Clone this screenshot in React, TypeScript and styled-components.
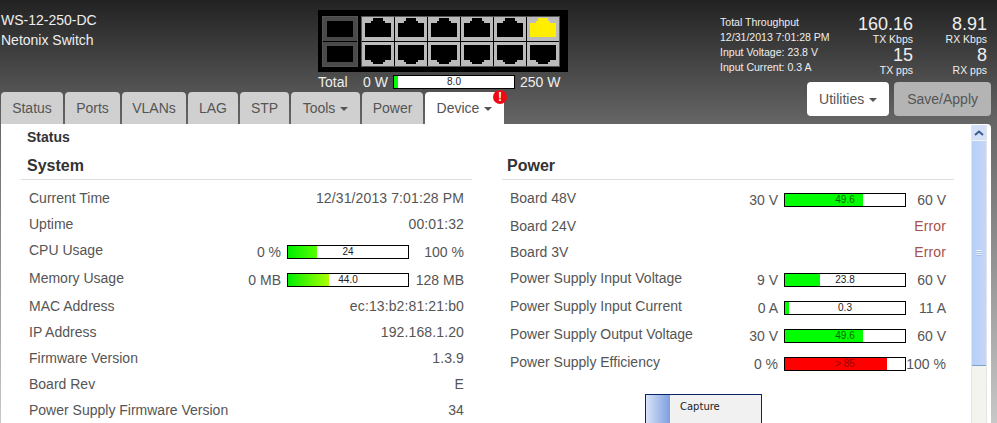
import React from "react";
import styled, { createGlobalStyle } from "styled-components";

const Global = createGlobalStyle`
  html, body { margin: 0; height: 423px; overflow: hidden; }
  body {
    font-family: "Liberation Sans", Arial, sans-serif;
    background: linear-gradient(to bottom, #222 0, #666 124px, #c8c8c8 423px) no-repeat;
  }
`;

const Page = styled.div`
  width: 997px;
  height: 423px;
  overflow: hidden;
  display: flex;
  flex-direction: column;
`;
const Header = styled.header`
  height: 124px;
  display: flex;
  justify-content: space-between;
  flex: none;
`;
const HeaderLeft = styled.div`
  display: flex;
  flex-direction: column;
  justify-content: space-between;
  padding-left: 1px;
`;
const TopRow = styled.div`
  display: flex;
  padding-top: 10px;
`;
const Brand = styled.div`
  width: 317px;
  color: #eee;
  font-size: 14px;
  line-height: 20px;
`;
const SwitchColumn = styled.div`
  width: 250px;
  color: #eee;
  font-size: 14px;
`;
const SwitchBox = styled.div`
  height: 62px;
  background: #000;
  display: flex;
  align-items: center;
  gap: 5px;
  padding-left: 5px;
  box-sizing: border-box;
`;
const PortGrid = styled.div<{ $cols: number }>`
  display: grid;
  grid-template-columns: repeat(${(p) => p.$cols}, auto);
  gap: 1px;
  outline: 1px solid #555;
`;
const Svg = styled.svg`
  display: block;
`;
const TotalRow = styled.div`
  display: flex;
  align-items: center;
  height: 20px;
`;
const TotalLabel = styled.span`
  width: 45px;
`;
const TotalMin = styled.span`
  width: 30px;
`;
const TotalMax = styled.span`
  margin-left: 5px;
`;
const Tabs = styled.nav`
  display: flex;
  gap: 2px;
`;
const Tab = styled.div<{ $active?: boolean; $w: number }>`
  position: relative;
  width: ${(p) => p.$w}px;
  height: 32px;
  border-radius: 4px 4px 0 0;
  background: ${(p) => (p.$active ? "#fff" : "#d0d0d0")};
  color: #555;
  font-size: 14px;
  line-height: 32px;
  text-align: center;
  white-space: nowrap;
`;
const Caret = styled.span`
  display: inline-block;
  margin-left: 5px;
  vertical-align: middle;
  border-top: 4px solid #555;
  border-left: 4px solid transparent;
  border-right: 4px solid transparent;
`;
const Badge = styled.span`
  position: absolute;
  top: -2px;
  right: -3px;
  width: 14px;
  height: 14px;
  border-radius: 50%;
  background: #ee0a14;
  color: #fff;
  font-size: 12px;
  font-weight: bold;
  line-height: 14px;
  text-align: center;
`;
const HeaderRight = styled.div`
  width: 277px;
  display: flex;
  flex-direction: column;
  padding-right: 6px;
  box-sizing: border-box;
`;
const Stats = styled.div`
  display: flex;
  height: 82px;
  padding-top: 15px;
  box-sizing: border-box;
`;
const Throughput = styled.div`
  width: 120px;
  color: #eee;
  font-size: 10.55px;
  line-height: 15px;
  white-space: nowrap;
`;
const StatGrid = styled.div`
  display: grid;
  grid-template-columns: 73px 74px;
  grid-auto-rows: 31px;
  text-align: right;
  color: #eee;
`;
const StatValue = styled.div`
  font-size: 18px;
  line-height: 19px;
`;
const StatUnit = styled.div`
  font-size: 10.5px;
  line-height: 10px;
`;
const Actions = styled.div`
  display: flex;
  justify-content: flex-end;
  gap: 5px;
`;
const Button = styled.div<{ $muted?: boolean; $pad: number }>`
  height: 34px;
  padding: 0 ${(p) => p.$pad}px;
  border-radius: 4px;
  background: ${(p) => (p.$muted ? "#b4b4b4" : "#fff")};
  color: #555;
  font-size: 14px;
  line-height: 34px;
`;
const Panel = styled.main`
  position: relative;
  flex: 1;
  min-height: 0;
  margin: 0 6px 0 1px;
  background: #fff;
  border-radius: 0 4px 0 0;
  display: flex;
  overflow: hidden;
`;
const Content = styled.div`
  flex: 1;
  padding: 4px 0 0 20px;
`;
const PageTitle = styled.h1`
  margin: 0 0 11px 6px;
  color: #333;
  font-size: 14px;
  line-height: 18px;
  font-weight: bold;
`;
const Columns = styled.div`
  display: grid;
  grid-template-columns: 451px 452px;
  gap: 30px;
`;
const Heading = styled.h2<{ $inset: number }>`
  margin: 0 0 5px;
  padding: 0 ${(p) => p.$inset}px 4px;
  border-bottom: 1px solid #ddd;
  color: #333;
  font-size: 16px;
  line-height: 18px;
  font-weight: bold;
`;
const Row = styled.div<{ $tall?: boolean }>`
  height: ${(p) => (p.$tall ? 28 : 26)}px;
  padding: 0 8px;
  display: flex;
  justify-content: space-between;
  color: #555;
  font-size: 14px;
  line-height: 26px;
`;
const Value = styled.span<{ $error?: boolean }>`
  color: ${(p) => (p.$error ? "#a5524c" : "#555")};
  letter-spacing: 0.12px;
`;
const MeterCell = styled.div`
  display: flex;
  align-items: center;
  height: 26px;
  margin-top: 2px;
`;
const MeterMin = styled.span`
  margin-right: 6px;
  white-space: nowrap;
`;
const MeterMax = styled.span<{ $w: number }>`
  width: ${(p) => p.$w}px;
  text-align: right;
  white-space: nowrap;
`;
const MeterBox = styled.div<{ $w: number }>`
  position: relative;
  width: ${(p) => p.$w}px;
  height: 14px;
  box-sizing: border-box;
  border: 1px solid #000;
  background: #fff;
  overflow: hidden;
  flex: none;
`;
const MeterFill = styled.div<{ $bg: string }>`
  height: 100%;
  background: ${(p) => p.$bg};
`;
const MeterText = styled.span<{ $color?: string }>`
  position: absolute;
  inset: 0;
  text-align: center;
  color: ${(p) => p.$color || "#222"};
  font-size: 10px;
  line-height: 11px;
`;
const Scrollbar = styled.div`
  width: 16px;
  margin: 1px 4px 0 0;
  flex: none;
  background: #f4f4ef;
  border-left: 1px solid #e4e4e4;
  border-right: 1px solid #e4e4e4;
  box-sizing: border-box;
`;
const ScrollUp = styled.div`
  height: 15px;
  background: #d3e0f8;
  display: flex;
  align-items: center;
  justify-content: center;
`;
const ScrollThumb = styled.div`
  height: 225px;
  margin-top: 1px;
  background: linear-gradient(to right, #b9cff6, #c4d6fa);
  border-bottom: 1px solid #7f9fd0;
  display: flex;
  align-items: center;
  justify-content: center;
  box-sizing: border-box;
`;
const Grip = styled.div`
  width: 6px;
  height: 6px;
  background: repeating-linear-gradient(to bottom, #e8f0ff 0 1px, #a8c0ec 1px 2px);
`;
const ContextMenu = styled.div`
  position: absolute;
  left: 644px;
  top: 270px;
  width: 117px;
  height: 60px;
  box-sizing: border-box;
  border: 1px solid #0a246a;
  background: #f1f1f1;
  display: flex;
`;
const MenuStrip = styled.div`
  width: 24px;
  background: linear-gradient(to right, #d8e4f8, #7d9edf);
`;
const MenuItem = styled.div`
  padding: 5px 0 0 10px;
  color: #222;
  font-family: "DejaVu Sans", sans-serif;
  font-size: 10px;
  line-height: 14px;
`;

const Copper = ({ flip, on }: { flip?: boolean; on?: boolean }) => (
  <Svg width="32" height="24" viewBox="0 0 32 24">
    <rect width="32" height="24" fill="#bbb" />
    <path
      d={flip
        ? "M3 3H29V18H23V20H21V22H11V20H9V18H3Z"
        : "M3 6H9V4H11V1H21V4H23V6H29V20H3Z"}
      fill={on ? "#ffee00" : "#000"}
    />
  </Svg>
);
const Sfp = () => (
  <Svg width="34" height="24" viewBox="0 0 34 24">
    <rect width="34" height="24" fill="#4a4a4a" />
    <rect x="4" y="4" width="26" height="16" fill="#000" />
  </Svg>
);

const Meter = ({ w = 122, pct, bg = "#00ff00", text, color }: { w?: number; pct: number; bg?: string; text: string; color?: string }) => (
  <MeterBox $w={w}>
    <MeterFill $bg={bg} style={{ width: `${pct}%` }} />
    <MeterText $color={color}>{text}</MeterText>
  </MeterBox>
);

const MeterRow = (p: { label: string; min: string; max: string; pct: number; bg?: string; text: string; color?: string; maxWidth: number }) => (
  <Row $tall>
    <span>{p.label}</span>
    <MeterCell>
      <MeterMin>{p.min}</MeterMin>
      <Meter pct={p.pct} bg={p.bg} text={p.text} color={p.color} />
      <MeterMax $w={p.maxWidth}>{p.max}</MeterMax>
    </MeterCell>
  </Row>
);

const TextRow = ({ label, value, error }: { label: string; value: string; error?: boolean }) => (
  <Row>
    <span>{label}</span>
    <Value $error={error}>{value}</Value>
  </Row>
);

export default function App() {
  return (
    <Page>
      <Global />
      <Header>
        <HeaderLeft>
          <TopRow>
            <Brand>
              WS-12-250-DC
              <br />
              Netonix Switch
            </Brand>
            <SwitchColumn>
              <SwitchBox>
                <PortGrid $cols={1}>
                  <Sfp />
                  <Sfp />
                </PortGrid>
                <PortGrid $cols={6}>
                  {[0, 1, 2, 3, 4, 5].map((i) => (
                    <Copper key={i} on={i === 5} />
                  ))}
                  {[0, 1, 2, 3, 4, 5].map((i) => (
                    <Copper key={i} flip />
                  ))}
                </PortGrid>
              </SwitchBox>
              <TotalRow>
                <TotalLabel>Total</TotalLabel>
                <TotalMin>0 W</TotalMin>
                <Meter w={122} pct={3.5} text="8.0" />
                <TotalMax>250 W</TotalMax>
              </TotalRow>
            </SwitchColumn>
          </TopRow>
          <Tabs>
            <Tab $w={62}>Status</Tab>
            <Tab $w={55}>Ports</Tab>
            <Tab $w={64}>VLANs</Tab>
            <Tab $w={50}>LAG</Tab>
            <Tab $w={49}>STP</Tab>
            <Tab $w={69}>
              Tools
              <Caret />
            </Tab>
            <Tab $w={61}>Power</Tab>
            <Tab $w={79} $active>
              Device
              <Caret />
              <Badge>!</Badge>
            </Tab>
          </Tabs>
        </HeaderLeft>
        <HeaderRight>
          <Stats>
            <Throughput>
              Total Throughput
              <br />
              12/31/2013 7:01:28 PM
              <br />
              Input Voltage: 23.8 V
              <br />
              Input Current: 0.3 A
            </Throughput>
            <StatGrid>
              <div>
                <StatValue>160.16</StatValue>
                <StatUnit>TX Kbps</StatUnit>
              </div>
              <div>
                <StatValue>8.91</StatValue>
                <StatUnit>RX Kbps</StatUnit>
              </div>
              <div>
                <StatValue>15</StatValue>
                <StatUnit>TX pps</StatUnit>
              </div>
              <div>
                <StatValue>8</StatValue>
                <StatUnit>RX pps</StatUnit>
              </div>
            </StatGrid>
          </Stats>
          <Actions>
            <Button $pad={12}>
              Utilities
              <Caret />
            </Button>
            <Button $pad={13} $muted>Save/Apply</Button>
          </Actions>
        </HeaderRight>
      </Header>
      <Panel>
        <Content>
          <PageTitle>Status</PageTitle>
          <Columns>
            <section>
              <Heading $inset={6}>System</Heading>
              <TextRow label="Current Time" value="12/31/2013 7:01:28 PM" />
              <TextRow label="Uptime" value="00:01:32" />
              <MeterRow label="CPU Usage" min="0 %" max="100 %" maxWidth={55} pct={24} bg="linear-gradient(to right,#00ee00,#55ff00)" text="24" />
              <MeterRow label="Memory Usage" min="0 MB" max="128 MB" maxWidth={55} pct={34} bg="linear-gradient(to right,#00ee00,#aaff00)" text="44.0" />
              <TextRow label="MAC Address" value="ec:13:b2:81:21:b0" />
              <TextRow label="IP Address" value="192.168.1.20" />
              <TextRow label="Firmware Version" value="1.3.9" />
              <TextRow label="Board Rev" value="E" />
              <TextRow label="Power Supply Firmware Version" value="34" />
            </section>
            <section>
              <Heading $inset={5}>Power</Heading>
              <MeterRow label="Board 48V" min="30 V" max="60 V" maxWidth={40} pct={65} text="49.6" color="#060" />
              <TextRow label="Board 24V" value="Error" error />
              <TextRow label="Board 3V" value="Error" error />
              <MeterRow label="Power Supply Input Voltage" min="9 V" max="60 V" maxWidth={40} pct={29} text="23.8" />
              <MeterRow label="Power Supply Input Current" min="0 A" max="11 A" maxWidth={40} pct={3} text="0.3" />
              <MeterRow label="Power Supply Output Voltage" min="30 V" max="60 V" maxWidth={40} pct={65} text="49.6" color="#060" />
              <MeterRow label="Power Supply Efficiency" min="0 %" max="100 %" maxWidth={40} pct={85} bg="#ff0000" text="> 85" color="#900" />
            </section>
          </Columns>
        </Content>
        <Scrollbar>
          <ScrollUp>
            <svg width="10" height="6" viewBox="0 0 10 6">
              <path d="M1 5L5 1.5L9 5" fill="none" stroke="#3f5a8f" strokeWidth="2" />
            </svg>
          </ScrollUp>
          <ScrollThumb>
            <Grip />
          </ScrollThumb>
        </Scrollbar>
        <ContextMenu>
          <MenuStrip />
          <MenuItem>Capture</MenuItem>
        </ContextMenu>
      </Panel>
    </Page>
  );
}
